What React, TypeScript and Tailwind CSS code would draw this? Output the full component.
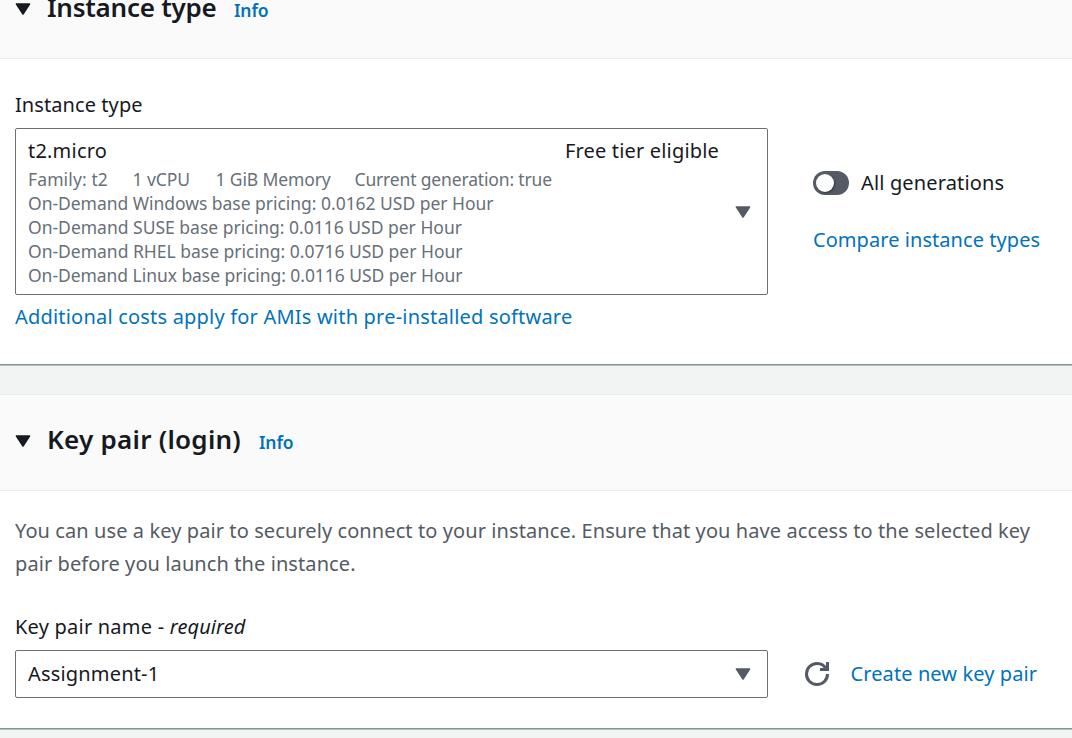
import type { ReactNode } from "react";

function Caret({ className }: { className?: string }) {
  return (
    <svg width="16" height="12" viewBox="0 0 16 12" className={className} aria-hidden="true">
      <path d="M1.5 1h13L8 11z" fill="currentColor" stroke="currentColor" strokeWidth="1.6" strokeLinejoin="round" />
    </svg>
  );
}

function RefreshIcon() {
  return (
    <svg width="24" height="24" viewBox="0 0 16 16" fill="none" stroke="currentColor" strokeWidth="2" aria-hidden="true">
      <path d="M10 5h5V0" />
      <path d="M15 8a6.957 6.957 0 0 1-7 7 6.957 6.957 0 0 1-7-7 6.957 6.957 0 0 1 7-7 6.87 6.87 0 0 1 6.3 4" />
    </svg>
  );
}

function SectionHeader({ title, titleClass }: { title: string; titleClass: string }) {
  return (
    <header className="flex h-24 items-start border-b border-[#eaeded] bg-[#fafafa] pt-6 pl-[15px]">
      <Caret className="mt-4 shrink-0 text-[#16191f]" />
      <div className="ml-4 flex items-baseline whitespace-nowrap">
        <h2 className={`text-[26px] leading-10 font-semibold text-[#16191f] ${titleClass}`}>{title}</h2>
        <a href="#" className="ml-4 text-[17.5px] leading-6 font-semibold tracking-[-0.1px] text-[#0073bb]">Info</a>
      </div>
    </header>
  );
}

function TextLink({ className, children }: { className: string; children: ReactNode }) {
  return (
    <a href="#" className={`whitespace-nowrap text-[#0073bb] ${className}`}>
      {children}
    </a>
  );
}

export default function App() {
  return (
    <main className="flex h-[738px] w-[1072px] flex-col overflow-hidden bg-[#f2f3f3] font-['Noto_Sans',sans-serif] text-[20px] text-[#16191f]">
      <section className="-mt-[37px] shrink-0 border-b border-[#879596] bg-white shadow-[0_1px_0_0_#b4bdbe]">
        <SectionHeader title="Instance type" titleClass="w-[171px] tracking-[-0.25px]" />
        <div className="flex h-[305px] gap-[45px] pt-[31px] pl-[15px]">
          <div className="flex w-[753px] flex-col">
            <label className="leading-[30px] tracking-[0.08px]">Instance type</label>
            <button className="mt-2 flex h-[167px] items-start rounded-[2px] border border-[#687078] bg-white pl-3 text-left whitespace-nowrap">
              <div className="w-[691px] pt-[7px]">
                <div className="flex justify-between leading-[30px]">
                  <span className="tracking-[0.2px]">t2.micro</span>
                  <span className="tracking-[0.17px]">Free tier eligible</span>
                </div>
                <div className="mt-px text-[17.5px] leading-6 text-[#687078]">
                  <div className="flex tracking-[-0.13px]">
                    <span className="w-[104.5px] tracking-[0.12px]">Family: t2</span>
                    <span className="w-[83px] tracking-[-0.05px]">1 vCPU</span>
                    <span className="w-[139px]">1 GiB Memory</span>
                    <span className="tracking-[-0.16px]">Current generation: true</span>
                  </div>
                  <div className="tracking-[-0.03px]">On-Demand Windows base pricing: 0.0162 USD per Hour</div>
                  <div>On-Demand SUSE base pricing: 0.0116 USD per Hour</div>
                  <div className="tracking-[-0.01px]">On-Demand RHEL base pricing: 0.0716 USD per Hour</div>
                  <div className="tracking-[-0.05px]">On-Demand Linux base pricing: 0.0116 USD per Hour</div>
                </div>
              </div>
              <Caret className="ml-4 self-center text-[#545b64]" />
            </button>
            <TextLink className="mt-[6px] leading-8 tracking-[0.2px]">
              Additional costs apply for AMIs with pre-installed software
            </TextLink>
          </div>
          <div className="flex flex-col items-start pt-[78px]">
            <div className="flex items-center gap-3 leading-[30px]">
              <span role="switch" aria-checked="false" className="flex h-6 w-9 items-center rounded-full bg-[#545b64] pl-[3px]">
                <span className="size-[18px] rounded-full bg-white shadow-[1px_1px_2px_rgba(0,0,0,0.4)]" />
              </span>
              <span className="tracking-[0.15px]">All generations</span>
            </div>
            <TextLink className="mt-[27px] leading-[30px] tracking-[0.06px]">Compare instance types</TextLink>
          </div>
        </div>
      </section>

      <section className="mt-[29px] shrink-0 border-t border-b border-t-[#eaeded] border-b-[#879596] bg-white shadow-[0_1px_0_0_#b4bdbe]">
        <SectionHeader title="Key pair (login)" titleClass="w-[196px] tracking-[0.26px]" />
        <div className="flex h-[237px] flex-col pt-[23px] pl-[15px]">
          <p className="leading-[33px] tracking-[0.09px] whitespace-nowrap text-[#545b64]">
            You can use a key pair to securely connect to your instance. Ensure that you have access to the selected key
            <br />
            pair before you launch the instance.
          </p>
          <label className="mt-8 leading-[30px] tracking-[0.22px]">
            Key pair name - <em className="tracking-[0.1px]">required</em>
          </label>
          <div className="mt-2 flex items-center">
            <button className="flex h-12 w-[753px] items-center rounded-[2px] border border-[#687078] bg-white pl-3 text-left">
              <span className="w-[691px] tracking-[0.18px]">Assignment-1</span>
              <Caret className="ml-4 text-[#545b64]" />
            </button>
            <button className="ml-[37px] text-[#545b64]" aria-label="Refresh">
              <RefreshIcon />
            </button>
            <TextLink className="ml-[21.5px] leading-[30px] tracking-[0.1px]">Create new key pair</TextLink>
          </div>
        </div>
      </section>
    </main>
  );
}
